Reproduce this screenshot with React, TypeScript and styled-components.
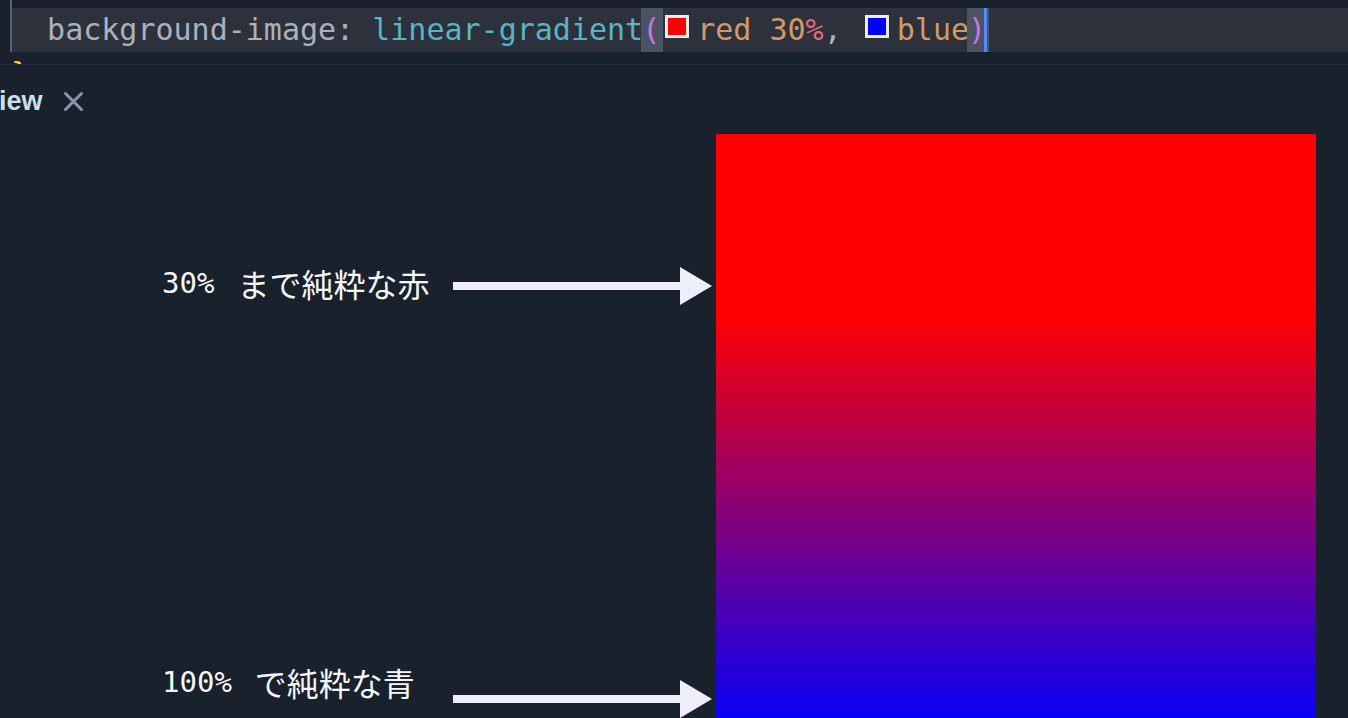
import React from "react";
import styled, { createGlobalStyle } from "styled-components";

const Global = createGlobalStyle`
  html, body { margin: 0; padding: 0; background: #18212c; overflow: hidden; }
  body { width: 1348px; height: 718px; }
`;

const Page = styled.div`
  width: 1348px;
  height: 718px;
  overflow: hidden;
  background: #18212c;
  display: flex;
  flex-direction: column;
`;

const Editor = styled.div`
  height: 64px;
  flex: none;
  overflow: hidden;
  padding-left: 10px;
  border-bottom: 1px solid #243040;
  font-family: "DejaVu Sans Mono", monospace;
  font-size: 30px;
  color: #abb2bf;
`;

const Line = styled.div<{ $guide?: boolean; $active?: boolean; $h?: number }>`
  height: ${(p) => p.$h ?? 44}px;
  line-height: 44px;
  white-space: pre;
  text-indent: -1px;
  border-left: 2px solid ${(p) => (p.$guide ? "#5c6370" : "transparent")};
  background: ${(p) => (p.$active ? "#2c313c" : "transparent")};
  background-clip: padding-box;
`;

const Tok = styled.span<{ $c: string }>`
  color: ${(p) => p.$c};
`;

const Bracket = styled.span`
  display: inline-block;
  height: 44px;
  vertical-align: top;
  padding: 0 3px 0 2px;
  margin: 0 -3px 0 -2px;
  background: #4b5263;
  color: #c678dd;
`;

const Swatch = styled.span<{ $color: string }>`
  display: inline-block;
  box-sizing: border-box;
  width: 24px;
  height: 23px;
  margin: 0 8px 2px 5px;
  border: 3px solid #ececec;
  background: ${(p) => p.$color};
  vertical-align: baseline;
`;

const Cursor = styled.span`
  display: inline-block;
  width: 3px;
  height: 44px;
  margin-left: -2px;
  vertical-align: top;
  background: #528bff;
`;

const TabBar = styled.div`
  height: 69px;
  flex: none;
  display: flex;
  align-items: center;
  gap: 20px;
  padding-top: 3px;
  box-sizing: border-box;
`;

const TabTitle = styled.span`
  font-family: "Liberation Sans", Arial, sans-serif;
  font-weight: 700;
  font-size: 27px;
  color: #c9e0e9;
  margin-left: -1px;
`;

const Body = styled.div`
  display: flex;
  align-items: flex-start;
`;

const Annotations = styled.div`
  width: 716px;
  flex: none;
  box-sizing: border-box;
  padding: 133px 0 0 162px;
  display: flex;
  flex-direction: column;
  gap: 375px;
`;

const Row = styled.div`
  display: grid;
  grid-template-columns: 291px 259px;
  align-items: center;
  height: 38px;
`;

const Label = styled.div<{ $raise?: number }>`
  display: flex;
  align-items: center;
  gap: 23px;
  color: #f6f6f6;
  line-height: 38px;
  white-space: nowrap;
  margin-top: ${(p) => -(p.$raise ?? 0) * 2}px;
`;

const Num = styled.span`
  font-family: "DejaVu Sans Mono", monospace;
  font-size: 29px;
`;

const Jp = styled.span`
  font-family: "Noto Sans CJK JP", sans-serif;
  font-size: 32px;
  font-weight: 400;
`;

const GradientBox = styled.div`
  width: 600px;
  height: 600px;
  flex: none;
  background-image: linear-gradient(red 30%, blue);
`;

const Arrow = () => (
  <svg width="259" height="38" viewBox="0 0 259 38">
    <rect x="0" y="15" width="228" height="8" fill="#eeeefb" />
    <polygon points="227,0 259,19 227,38" fill="#eeeefb" />
  </svg>
);

const CloseIcon = () => (
  <svg width="21" height="21" viewBox="0 0 21 21">
    <path d="M2.5 2.5 L18.5 18.5 M18.5 2.5 L2.5 18.5" stroke="#8a97ab" strokeWidth="3" strokeLinecap="round" />
  </svg>
);

export default function App() {
  return (
    <Page>
      <Global />
      <Editor>
        <Line $guide $h={8} />
        <Line $guide $active>
          <Tok $c="#abb2bf">{"  background-image: "}</Tok>
          <Tok $c="#56b6c2">linear-gradient</Tok>
          <Bracket>(</Bracket>
          <Swatch $color="#ff0000" />
          <Tok $c="#d19a66">red 30</Tok>
          <Tok $c="#e06c75">%</Tok>
          <Tok $c="#abb2bf">{", "}</Tok>
          <Swatch $color="#0000ff" />
          <Tok $c="#d19a66">blue</Tok>
          <Bracket>)</Bracket>
          <Cursor />
        </Line>
        <Line>
          <Tok $c="#ffd700">{"}"}</Tok>
        </Line>
      </Editor>
      <TabBar>
        <TabTitle>iew</TabTitle>
        <CloseIcon />
      </TabBar>
      <Body>
        <Annotations>
          <Row>
            <Label $raise={3}>
              <Num>30%</Num>
              <Jp>まで純粋な赤</Jp>
            </Label>
            <Arrow />
          </Row>
          <Row>
            <Label $raise={17}>
              <Num>100%</Num>
              <Jp>で純粋な青</Jp>
            </Label>
            <Arrow />
          </Row>
        </Annotations>
        <GradientBox />
      </Body>
    </Page>
  );
}
